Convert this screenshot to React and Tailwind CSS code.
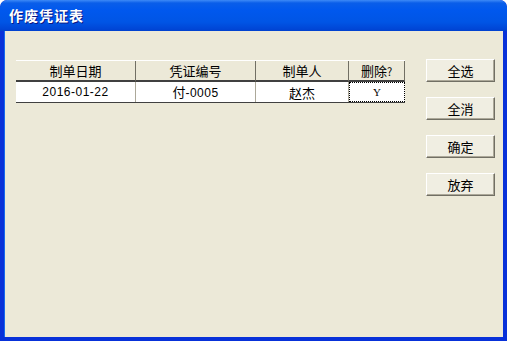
import React from "react";

const font = { fontFamily: '"Noto Sans CJK SC", "Liberation Sans", sans-serif' };
const num = { fontFamily: '"Liberation Sans", sans-serif', fontSize: 12, letterSpacing: "0.5px" };

function Btn({ children }) {
  return (
    <div className="w-[69px] h-[23px] bg-[#f0eee2] border border-white border-r-[#716f64] border-b-[#716f64] shadow-[inset_-1px_-1px_0_#aca899] flex items-center justify-center text-[13px] text-black leading-none">
      {children}
    </div>
  );
}

export default function App() {
  const cols = [
    { w: "w-[120px]", h: "制单日期", v: <span style={num}>2016-01-22</span> },
    { w: "w-[120px]", h: "凭证编号", v: <span>付<span style={num}>-0005</span></span> },
    { w: "w-[93px]", h: "制单人", v: "赵杰" },
    { w: "w-[56px]", h: <span>删除<span className="text-[11px]">?</span></span>, v: <span style={{ fontFamily: '"Liberation Serif", serif', fontSize: 11 }}>Y</span> },
  ];
  return (
    <div className="w-[507px] h-[341px] bg-[#0831d9] rounded-t-[7px] flex flex-col overflow-hidden" style={font}>
      <div className="h-[31px] shrink-0 rounded-t-[7px] bg-[linear-gradient(to_bottom,#3d8af7_0px,#0a5ee9_3px,#0058ee_10px,#0055e5_22px,#0046d6_29px,#0040cf_31px)] flex items-center pl-[9px]">
        <span className="text-white font-bold text-[14px] tracking-[1px] [text-shadow:1px_1px_0_#0a1883]">作废凭证表</span>
      </div>
      <div className="flex-1 mx-[4px] mb-[4px] bg-[#ece9d8] border-l border-[#166aee] flex pt-[29px] pl-[11px]">
        <div className="flex flex-col">
          <div className="flex h-[22px] bg-[#ece9d8] border-t border-white">
            {cols.map((c, i) => (
              <div key={i} className={`${c.w} flex items-center justify-center border-r border-[#716f64] border-b-2 border-b-[#404040] text-[13px] text-black leading-none`}>
                {c.h}
              </div>
            ))}
          </div>
          <div className="flex h-[21px] bg-white border-b border-[#404040]">
            {cols.map((c, i) => (
              <div key={i} className={`${c.w} flex items-center justify-center ${i < 3 ? "border-r border-[#aca899]" : "border border-dotted border-black"} text-[13px] text-black leading-none`}>
                {c.v}
              </div>
            ))}
          </div>
        </div>
        <div className="ml-[21px] mt-[-1px] flex flex-col gap-[15px]">
          <Btn>全选</Btn>
          <Btn>全消</Btn>
          <Btn>确定</Btn>
          <Btn>放弃</Btn>
        </div>
      </div>
    </div>
  );
}
